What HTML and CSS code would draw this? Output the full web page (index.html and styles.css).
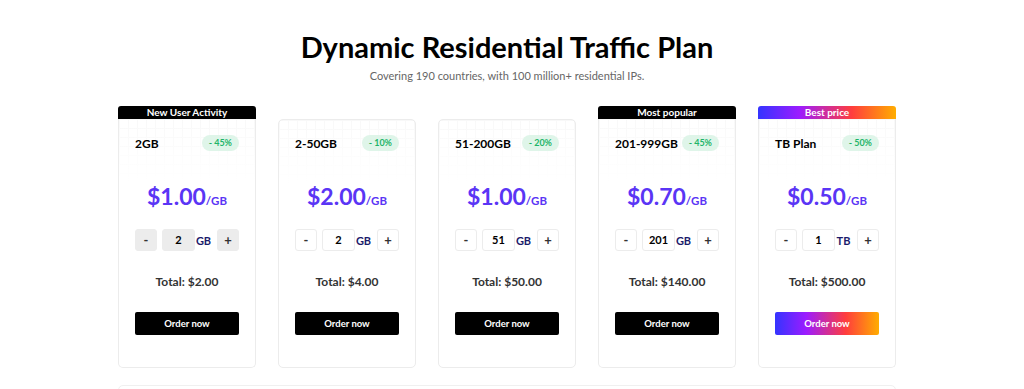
FILE: index.html
```html
<!DOCTYPE html>
<html lang="en">
<head>
<meta charset="utf-8">
<title>Dynamic Residential Traffic Plan</title>
<link rel="stylesheet" href="styles.css">
</head>
<body>
<main class="page">
  <header class="intro">
    <h1 class="title">Dynamic Residential Traffic Plan</h1>
    <p class="subtitle">Covering 190 countries, with 100 million+ residential IPs.</p>
  </header>

  <section class="plans">
    <article class="plan has-ribbon">
      <div class="ribbon">New User Activity</div>
      <div class="card active">
        <div class="card-head"><span class="plan-name">2GB</span><span class="badge">- 45%</span></div>
        <div class="price"><span class="amount">$1.00</span><span class="unit">/GB</span></div>
        <div class="qty"><button class="qbtn">-</button><span class="qinput">2</span><span class="qunit">GB</span><button class="qbtn">+</button></div>
        <div class="total">Total: $2.00</div>
        <button class="order">Order now</button>
      </div>
    </article>

    <article class="plan">
      <div class="card">
        <div class="card-head"><span class="plan-name">2-50GB</span><span class="badge">- 10%</span></div>
        <div class="price"><span class="amount">$2.00</span><span class="unit">/GB</span></div>
        <div class="qty"><button class="qbtn">-</button><span class="qinput">2</span><span class="qunit">GB</span><button class="qbtn">+</button></div>
        <div class="total">Total: $4.00</div>
        <button class="order">Order now</button>
      </div>
    </article>

    <article class="plan">
      <div class="card">
        <div class="card-head"><span class="plan-name">51-200GB</span><span class="badge">- 20%</span></div>
        <div class="price"><span class="amount">$1.00</span><span class="unit">/GB</span></div>
        <div class="qty"><button class="qbtn">-</button><span class="qinput">51</span><span class="qunit">GB</span><button class="qbtn">+</button></div>
        <div class="total">Total: $50.00</div>
        <button class="order">Order now</button>
      </div>
    </article>

    <article class="plan has-ribbon">
      <div class="ribbon">Most popular</div>
      <div class="card">
        <div class="card-head"><span class="plan-name">201-999GB</span><span class="badge">- 45%</span></div>
        <div class="price"><span class="amount">$0.70</span><span class="unit">/GB</span></div>
        <div class="qty"><button class="qbtn">-</button><span class="qinput">201</span><span class="qunit">GB</span><button class="qbtn">+</button></div>
        <div class="total">Total: $140.00</div>
        <button class="order">Order now</button>
      </div>
    </article>

    <article class="plan has-ribbon">
      <div class="ribbon gradient">Best price</div>
      <div class="card">
        <div class="card-head"><span class="plan-name">TB Plan</span><span class="badge">- 50%</span></div>
        <div class="price"><span class="amount">$0.50</span><span class="unit">/GB</span></div>
        <div class="qty"><button class="qbtn">-</button><span class="qinput">1</span><span class="qunit">TB</span><button class="qbtn">+</button></div>
        <div class="total">Total: $500.00</div>
        <button class="order gradient">Order now</button>
      </div>
    </article>
  </section>

  <section class="next-block"></section>
</main>
</body>
</html>
```

FILE: styles.css
```css
* { box-sizing: border-box; }

html, body {
  margin: 0;
  background: #fff;
}

body {
  font-family: Lato, "Noto Sans", "Liberation Sans", sans-serif;
  color: #111;
}

.page {
  padding: 30px 10px 0 0;
}

.intro {
  text-align: center;
}

.title {
  margin: 0;
  font-size: 29px;
  line-height: 34px;
  font-weight: 700;
  color: #000;
}

.subtitle {
  margin: 5px 0 0;
  font-size: 11px;
  line-height: 14px;
  color: #666;
}

.plans {
  width: 778px;
  margin: 23px auto 0;
  display: flex;
  align-items: flex-end;
  gap: 22px;
}

.plan {
  flex: 0 0 138px;
  min-width: 0;
  display: flex;
  flex-direction: column;
}

.ribbon {
  height: 13px;
  line-height: 13px;
  background: #000;
  color: #fff;
  font-size: 10px;
  font-weight: 700;
  text-align: center;
  border-radius: 3px 3px 0 0;
}

.ribbon.gradient,
.order.gradient {
  background: linear-gradient(90deg, #3434ff 0%, #9c1cff 30%, #ff3d3d 68%, #ffad00 100%);
}

.card {
  border: 1px solid #ececec;
  border-radius: 5px;
  padding: 15px 16px 32px;
  background:
    linear-gradient(to bottom, rgba(255,255,255,0.45) 0, rgba(255,255,255,0.85) 40px, #fff 64px) no-repeat,
    linear-gradient(#f3f3f3 1px, transparent 1px),
    linear-gradient(90deg, #f3f3f3 1px, transparent 1px),
    #fff;
  background-size: 100% 100%, 9px 9px, 9px 9px;
}

.has-ribbon .card {
  border-top: none;
  border-radius: 0 0 5px 5px;
  padding-top: 16px;
}

.card-head {
  display: flex;
  align-items: center;
  justify-content: space-between;
  gap: 2px;
  height: 16px;
  white-space: nowrap;
}

.plan-name {
  font-size: 12px;
  font-weight: 700;
  color: #000;
}

.badge {
  flex: 0 0 auto;
  height: 16px;
  line-height: 16px;
  padding: 0 7px;
  border-radius: 8px;
  background: #dff5e9;
  color: #1fb46a;
  font-size: 9px;
  font-weight: 700;
}

.price {
  margin-top: 30px;
  height: 30px;
  display: flex;
  align-items: baseline;
  justify-content: center;
  color: #5a35f5;
  font-weight: 700;
}

.amount {
  font-size: 23px;
  line-height: 30px;
}

.unit {
  font-size: 11.5px;
}

.qty {
  margin-top: 18px;
  display: flex;
  align-items: center;
  height: 22px;
}

.qbtn {
  flex: 0 0 22px;
  width: 22px;
  height: 22px;
  padding: 0;
  border: 1px solid #ececec;
  border-radius: 3px;
  background: #fff;
  color: #333;
  font-family: inherit;
  font-size: 13px;
  line-height: 20px;
  font-weight: 700;
}

.qinput {
  flex: 0 0 33px;
  height: 22px;
  margin-left: 5px;
  line-height: 20px;
  border: 1px solid #ececec;
  border-radius: 3px;
  text-align: center;
  font-size: 11px;
  font-weight: 700;
  color: #000;
}

.qunit {
  flex: 0 0 17px;
  margin: 0 5px 0 0;
  text-align: center;
  font-size: 11px;
  font-weight: 700;
  color: #1b1b6b;
}

.active .qbtn,
.active .qinput {
  background: #ececec;
  border-color: #ececec;
}

.total {
  margin-top: 23px;
  height: 16px;
  line-height: 16px;
  text-align: center;
  font-size: 12px;
  font-weight: 700;
  color: #333;
}

.order {
  display: block;
  width: 100%;
  height: 23px;
  margin-top: 22px;
  border: none;
  border-radius: 2px;
  background: #000;
  color: #fff;
  font-family: inherit;
  font-size: 9.5px;
  font-weight: 700;
}

.next-block {
  width: 778px;
  height: 30px;
  margin: 17px auto 0;
  border: 1px solid #f0f0f0;
  border-radius: 5px;
}
```
